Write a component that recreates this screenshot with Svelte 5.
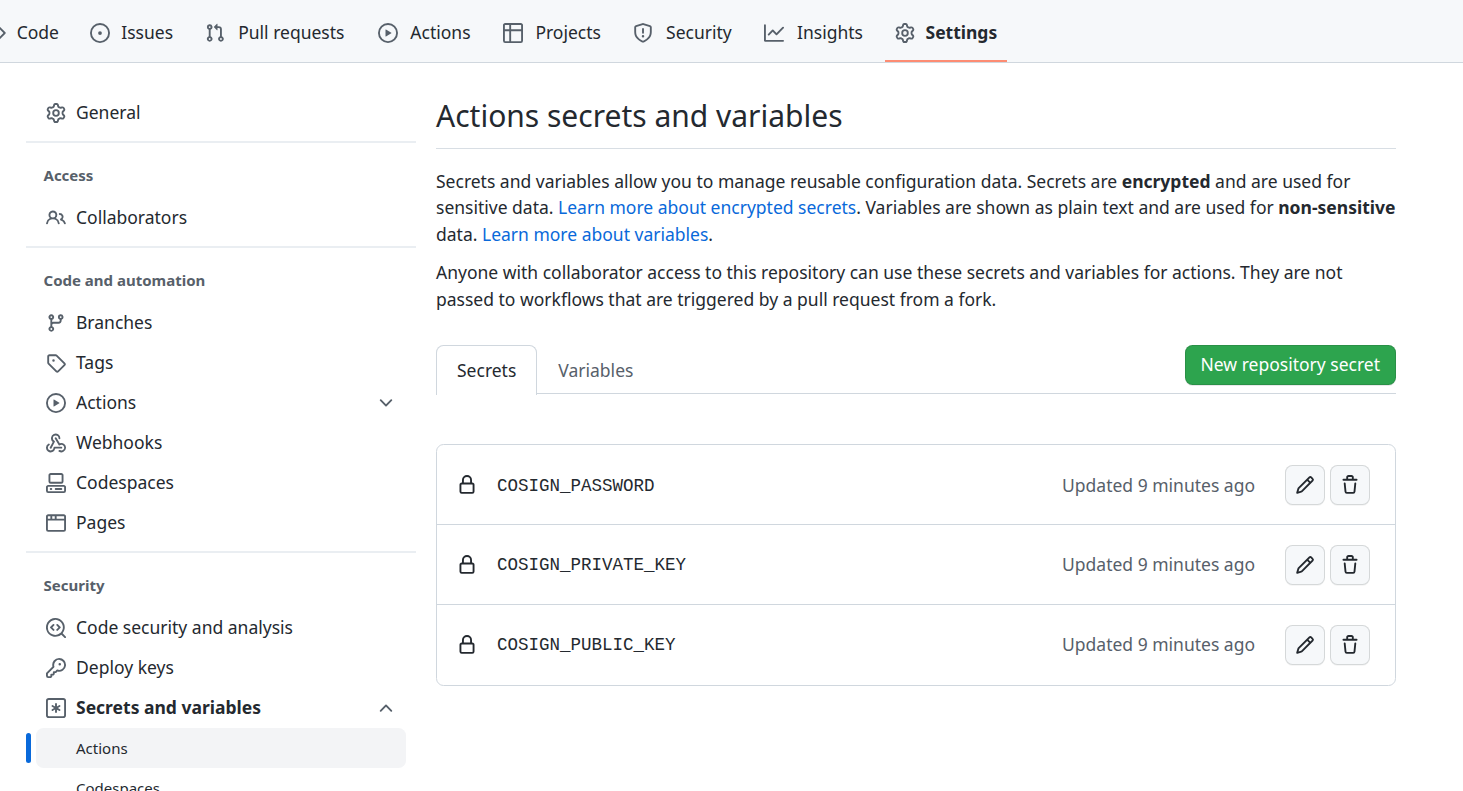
<script>
  const icons = {
    code: 'm11.28 3.22 4.25 4.25a.75.75 0 0 1 0 1.06l-4.25 4.25a.75.75 0 0 1-1.06-1.06L13.94 8l-3.72-3.72a.75.75 0 0 1 1.06-1.06Zm-6.56 0a.75.75 0 0 1 1.06 1.06L2.06 8l3.72 3.72a.75.75 0 0 1-1.06 1.06L.47 8.53a.75.75 0 0 1 0-1.06Z',
    issue: 'M8 9.5a1.5 1.5 0 100-3 1.5 1.5 0 000 3zM8 0a8 8 0 100 16A8 8 0 008 0zM1.5 8a6.5 6.5 0 1113 0 6.5 6.5 0 01-13 0z',
    pull: 'M7.177 3.073L9.573.677A.25.25 0 0110 .854v4.792a.25.25 0 01-.427.177L7.177 3.427a.25.25 0 010-.354zM3.75 2.5a.75.75 0 100 1.5.75.75 0 000-1.5zm-2.25.75a2.25 2.25 0 113 2.122v5.256a2.251 2.251 0 11-1.5 0V5.372A2.25 2.25 0 011.5 3.25zM11 2.5h-1V4h1a1 1 0 011 1v5.628a2.251 2.251 0 101.5 0V5A2.5 2.5 0 0011 2.5zm1 10.25a.75.75 0 111.5 0 .75.75 0 01-1.5 0zM3.75 12a.75.75 0 100 1.5.75.75 0 000-1.5z',
    play: 'M1.5 8a6.5 6.5 0 1113 0 6.5 6.5 0 01-13 0zM8 0a8 8 0 100 16A8 8 0 008 0zM6.379 5.227A.25.25 0 006 5.442v5.117a.25.25 0 00.379.214l4.264-2.559a.25.25 0 000-.428L6.379 5.227z',
    table: 'M0 1.75C0 .784.784 0 1.75 0h12.5C15.216 0 16 .784 16 1.75v12.5A1.75 1.75 0 0114.25 16H1.75A1.75 1.75 0 010 14.25V1.75zM1.5 6.5v7.75c0 .138.112.25.25.25H5v-8H1.5zM5 5H1.5V1.75a.25.25 0 01.25-.25H5V5zm1.5 1.5v8h7.75a.25.25 0 00.25-.25V6.5h-8zm8-1.5h-8V1.5h7.75a.25.25 0 01.25.25V5z',
    shield: 'M7.467.133a1.75 1.75 0 011.066 0l5.25 1.68A1.75 1.75 0 0115 3.48V7c0 1.566-.32 3.182-1.303 4.682-.983 1.498-2.585 2.813-5.032 3.855a1.7 1.7 0 01-1.33 0c-2.447-1.042-4.049-2.357-5.032-3.855C1.32 10.182 1 8.566 1 7V3.48a1.75 1.75 0 011.217-1.667l5.25-1.68zm.61 1.429a.25.25 0 00-.153 0l-5.25 1.68a.25.25 0 00-.174.238V7c0 1.358.275 2.666 1.057 3.86.784 1.194 2.121 2.34 4.366 3.297a.2.2 0 00.154 0c2.245-.956 3.582-2.104 4.366-3.298C13.225 9.666 13.5 8.36 13.5 7V3.48a.25.25 0 00-.174-.237l-5.25-1.68zM8.75 4.75a.75.75 0 00-1.5 0v3a.75.75 0 001.5 0v-3zM9 10.5a1 1 0 11-2 0 1 1 0 012 0z',
    graph: 'M1.5 1.75a.75.75 0 00-1.5 0v12.5c0 .414.336.75.75.75h14.5a.75.75 0 000-1.5H1.5V1.75zm14.28 2.53a.75.75 0 00-1.06-1.06L10 7.94 7.53 5.47a.75.75 0 00-1.06 0L3.22 8.72a.75.75 0 001.06 1.06L7 7.06l2.47 2.47a.75.75 0 001.06 0l5.25-5.25z',
    gear: 'M8 0a8.2 8.2 0 0 1 .701.031C9.444.095 9.99.645 10.16 1.29l.288 1.107c.018.066.079.158.212.224.231.114.454.243.668.386.123.082.233.09.299.071l1.103-.303c.644-.176 1.392.021 1.82.63.27.385.506.792.704 1.218.315.675.111 1.422-.364 1.891l-.814.806c-.049.048-.098.147-.088.294.016.257.016.515 0 .772-.01.147.038.246.088.294l.814.806c.475.469.679 1.216.364 1.891a7.977 7.977 0 0 1-.704 1.217c-.428.61-1.176.807-1.82.63l-1.102-.302c-.067-.019-.177-.011-.3.071a5.909 5.909 0 0 1-.668.386c-.133.066-.194.158-.211.224l-.29 1.106c-.168.646-.715 1.196-1.458 1.26a8.006 8.006 0 0 1-1.402 0c-.743-.064-1.289-.614-1.458-1.26l-.289-1.106c-.018-.066-.079-.158-.212-.224a5.738 5.738 0 0 1-.668-.386c-.123-.082-.233-.09-.299-.071l-1.103.303c-.644.176-1.392-.021-1.82-.63a8.12 8.12 0 0 1-.704-1.218c-.315-.675-.111-1.422.363-1.891l.815-.806c.05-.048.098-.147.088-.294a6.214 6.214 0 0 1 0-.772c.01-.147-.038-.246-.088-.294l-.815-.806C.635 6.045.431 5.298.746 4.623a7.92 7.92 0 0 1 .704-1.217c.428-.61 1.176-.807 1.82-.63l1.102.302c.067.019.177.011.3-.071.214-.143.437-.272.668-.386.133-.066.194-.158.211-.224l.29-1.106C6.009.645 6.556.095 7.299.03 7.53.01 7.764 0 8 0Zm-.571 1.525c-.036.003-.108.036-.137.146l-.289 1.105c-.147.561-.549.967-.998 1.189-.173.086-.34.183-.5.29-.417.278-.97.423-1.529.27l-1.103-.303c-.109-.03-.175.016-.195.045-.22.312-.412.644-.573.99-.014.031-.021.11.059.19l.815.806c.411.406.562.957.53 1.456a4.709 4.709 0 0 0 0 .582c.032.499-.119 1.05-.53 1.456l-.815.806c-.081.08-.073.159-.059.19.162.346.353.677.573.989.02.03.085.076.195.046l1.102-.303c.56-.153 1.113-.008 1.53.27.161.107.328.204.501.29.447.222.85.629.997 1.189l.289 1.105c.029.109.101.143.137.146a6.6 6.6 0 0 0 1.142 0c.036-.003.108-.036.137-.146l.289-1.105c.147-.561.549-.967.998-1.189.173-.086.34-.183.5-.29.417-.278.97-.423 1.529-.27l1.103.303c.109.029.175-.016.195-.045.22-.313.411-.644.573-.99.014-.031.021-.11-.059-.19l-.815-.806c-.411-.406-.562-.957-.53-1.456a4.709 4.709 0 0 0 0-.582c-.032-.499.119-1.05.53-1.456l.815-.806c.081-.08.073-.159.059-.19a6.464 6.464 0 0 0-.573-.989c-.02-.03-.085-.076-.195-.046l-1.102.303c-.56.153-1.113.008-1.53-.27a4.44 4.44 0 0 0-.501-.29c-.447-.222-.85-.629-.997-1.189l-.289-1.105c-.029-.11-.101-.143-.137-.146a6.6 6.6 0 0 0-1.142 0ZM11 8a3 3 0 1 1-6 0 3 3 0 0 1 6 0ZM9.5 8a1.5 1.5 0 1 0-3.001.001A1.5 1.5 0 0 0 9.5 8Z',
    people: 'M5.5 3.5a2 2 0 100 4 2 2 0 000-4zM2 5.5a3.5 3.5 0 115.898 2.549 5.507 5.507 0 013.034 4.084.75.75 0 11-1.482.235 4.001 4.001 0 00-7.9 0 .75.75 0 01-1.482-.236A5.507 5.507 0 013.102 8.05 3.49 3.49 0 012 5.5zM11 4a.75.75 0 100 1.5 1.5 1.5 0 01.666 2.844.75.75 0 00-.416.672v.352a.75.75 0 00.574.73c1.2.289 2.162 1.2 2.522 2.372a.75.75 0 101.434-.44 5.01 5.01 0 00-2.56-3.012A3 3 0 0011 4z',
    branch: 'M11.75 2.5a.75.75 0 100 1.5.75.75 0 000-1.5zm-2.25.75a2.25 2.25 0 113 2.122V6A2.5 2.5 0 0110 8.5H6a1 1 0 00-1 1v1.128a2.251 2.251 0 11-1.5 0V5.372a2.25 2.25 0 111.5 0v1.836A2.492 2.492 0 016 7h4a1 1 0 001-1v-.628A2.25 2.25 0 019.5 3.25zM4.25 12a.75.75 0 100 1.5.75.75 0 000-1.5zM3.5 3.25a.75.75 0 111.5 0 .75.75 0 01-1.5 0z',
    tag: 'M1 7.775V2.75C1 1.784 1.784 1 2.75 1h5.025c.464 0 .91.184 1.238.513l6.25 6.25a1.75 1.75 0 0 1 0 2.474l-5.026 5.026a1.75 1.75 0 0 1-2.474 0l-6.25-6.25A1.752 1.752 0 0 1 1 7.775Zm1.5 0c0 .066.026.13.073.177l6.25 6.25a.25.25 0 0 0 .354 0l5.025-5.025a.25.25 0 0 0 0-.354l-6.25-6.25a.25.25 0 0 0-.177-.073H2.75a.25.25 0 0 0-.25.25ZM6 5a1 1 0 1 1 0 2 1 1 0 0 1 0-2Z',
    webhook: 'M5.5 4.25a2.25 2.25 0 0 1 4.5 0 .75.75 0 0 0 1.5 0 3.75 3.75 0 1 0-6.14 2.889l-2.272 4.258a.75.75 0 0 0 1.324.706L7 7.25a.75.75 0 0 0-.309-1.015A2.25 2.25 0 0 1 5.5 4.25ZM7.364 3.607a.75.75 0 0 1 1.03.257l2.608 4.349a3.75 3.75 0 1 1-.628 6.785.75.75 0 0 1 .752-1.299 2.25 2.25 0 1 0-.033-3.88.75.75 0 0 1-1.03-.256L7.107 4.636a.75.75 0 0 1 .257-1.03ZM2.9 8.776A.75.75 0 0 1 2.625 9.8 2.25 2.25 0 1 0 6 11.75a.75.75 0 0 1 .75-.751h5.5a.75.75 0 0 1 0 1.5H7.425a3.751 3.751 0 1 1-5.55-3.998.75.75 0 0 1 1.024.274Z',
    codespaces: 'M0 11.25c0-.966.784-1.75 1.75-1.75h12.5c.966 0 1.75.784 1.75 1.75v3A1.75 1.75 0 0114.25 16H1.75A1.75 1.75 0 010 14.25zm2-9.5C2 .784 2.784 0 3.75 0h8.5C13.216 0 14 .784 14 1.75v5a1.75 1.75 0 01-1.75 1.75h-8.5A1.75 1.75 0 012 6.75zm1.75-.25a.25.25 0 00-.25.25v5c0 .138.112.25.25.25h8.5a.25.25 0 00.25-.25v-5a.25.25 0 00-.25-.25zm-2 9.5a.25.25 0 00-.25.25v3c0 .138.112.25.25.25h12.5a.25.25 0 00.25-.25v-3a.25.25 0 00-.25-.25zM7 12.75a.75.75 0 01.75-.75h4.5a.75.75 0 010 1.5h-4.5a.75.75 0 01-.75-.75zm-4 0a.75.75 0 01.75-.75h.5a.75.75 0 010 1.5h-.5a.75.75 0 01-.75-.75z',
    browser: 'M0 2.75C0 1.784.784 1 1.75 1h12.5c.966 0 1.75.784 1.75 1.75v10.5A1.75 1.75 0 0114.25 15H1.75A1.75 1.75 0 010 13.25zM14.5 6h-13v7.25c0 .138.112.25.25.25h12.5a.25.25 0 00.25-.25zm-6-3.5v2h6V2.75a.25.25 0 00-.25-.25zM5 2.5v2h2v-2zm-3.25 0a.25.25 0 00-.25.25V4.5h2v-2z',
    codescan: 'M8.47 4.97a.75.75 0 000 1.06L9.94 7.5 8.47 8.97a.75.75 0 101.06 1.06l2-2a.75.75 0 000-1.06l-2-2a.75.75 0 00-1.06 0zM6.53 6.03a.75.75 0 00-1.06-1.06l-2 2a.75.75 0 000 1.06l2 2a.75.75 0 101.06-1.06L5.06 7.5l1.47-1.47zM12.246 13.307a7.5 7.5 0 111.06-1.06l2.474 2.473a.75.75 0 11-1.06 1.06l-2.474-2.473zM1.5 7.5a6 6 0 1110.386 4.094.75.75 0 00-.292.293A6 6 0 011.5 7.5z',
    key: 'M10.5 0a5.499 5.499 0 1 1-1.288 10.848l-.932.932a.749.749 0 0 1-.53.22H7v.75a.749.749 0 0 1-.22.53l-.5.5a.749.749 0 0 1-.53.22H5v.75a.749.749 0 0 1-.22.53l-.5.5a.749.749 0 0 1-.53.22h-2A1.75 1.75 0 0 1 0 14.25v-2c0-.199.079-.389.22-.53l4.932-4.932A5.5 5.5 0 0 1 10.5 0Zm-4 5.5c-.001.431.069.86.205 1.269a.75.75 0 0 1-.181.768L1.5 12.56v1.69c0 .138.112.25.25.25h1.69l.06-.06v-1.19a.75.75 0 0 1 .75-.75h1.19l.06-.06v-1.19a.75.75 0 0 1 .75-.75h1.19l1.023-1.025a.75.75 0 0 1 .768-.18A4 4 0 1 0 6.5 5.5ZM11 6a1 1 0 1 1 0-2 1 1 0 0 1 0 2Z',
    asterisk: 'M2.25 0h11.5A2.25 2.25 0 0 1 16 2.25v11.5A2.25 2.25 0 0 1 13.75 16H2.25A2.25 2.25 0 0 1 0 13.75V2.25A2.25 2.25 0 0 1 2.25 0Zm0 1.5a.75.75 0 0 0-.75.75v11.5c0 .414.336.75.75.75h11.5a.75.75 0 0 0 .75-.75V2.25a.75.75 0 0 0-.75-.75ZM8 4a.75.75 0 0 1 .75.75V6.7l1.69-.975a.75.75 0 0 1 .75 1.3L9.5 8l1.69.976a.75.75 0 0 1-.75 1.298L8.75 9.3v1.951a.75.75 0 0 1-1.5 0V9.299l-1.69.976a.75.75 0 0 1-.75-1.3L6.5 8l-1.69-.975a.75.75 0 0 1 .75-1.3l1.69.976V4.75A.75.75 0 0 1 8 4Z',
    lock: 'M4 4a4 4 0 0 1 8 0v2h.25c.966 0 1.75.784 1.75 1.75v5.5A1.75 1.75 0 0 1 12.25 15h-8.5A1.75 1.75 0 0 1 2 13.25v-5.5C2 6.784 2.784 6 3.75 6H4Zm8.25 3.5h-8.5a.25.25 0 0 0-.25.25v5.5c0 .138.112.25.25.25h8.5a.25.25 0 0 0 .25-.25v-5.5a.25.25 0 0 0-.25-.25ZM10.5 6V4a2.5 2.5 0 1 0-5 0v2Z',
    pencil: 'M11.013 1.427a1.75 1.75 0 012.474 0l1.086 1.086a1.75 1.75 0 010 2.474l-8.61 8.61c-.21.21-.47.364-.756.445l-3.251.93a.75.75 0 01-.927-.928l.929-3.25a1.75 1.75 0 01.445-.758l8.61-8.61zm1.414 1.06a.25.25 0 00-.354 0L10.811 3.75l1.439 1.44 1.263-1.263a.25.25 0 000-.354l-1.086-1.086zM11.189 6.25L9.75 4.81l-6.286 6.287a.25.25 0 00-.064.108l-.558 1.953 1.953-.558a.249.249 0 00.108-.064l6.286-6.286z',
    trash: 'M11 1.75V3h2.25a.75.75 0 0 1 0 1.5H2.75a.75.75 0 0 1 0-1.5H5V1.75C5 .784 5.784 0 6.75 0h2.5C10.216 0 11 .784 11 1.75ZM4.496 6.675l.66 6.6a.25.25 0 0 0 .249.225h5.19a.25.25 0 0 0 .249-.225l.66-6.6a.75.75 0 0 1 1.492.149l-.66 6.6A1.748 1.748 0 0 1 10.595 15h-5.19a1.75 1.75 0 0 1-1.741-1.575l-.66-6.6a.75.75 0 1 1 1.492-.15ZM6.5 1.75V3h3V1.75a.25.25 0 0 0-.25-.25h-2.5a.25.25 0 0 0-.25.25Z',
    down: 'M12.78 5.22a.75.75 0 010 1.06l-4.25 4.25a.75.75 0 01-1.06 0L3.22 6.28a.75.75 0 011.06-1.06L8 8.94l3.72-3.72a.75.75 0 011.06 0z',
    up: 'M3.22 10.78a.75.75 0 010-1.06l4.25-4.25a.75.75 0 011.06 0l4.25 4.25a.75.75 0 01-1.06 1.06L8 7.06l-3.72 3.72a.75.75 0 01-1.06 0z'
  };

  const tabs = [
    ['code', 'Code'],
    ['issue', 'Issues'],
    ['pull', 'Pull requests'],
    ['play', 'Actions'],
    ['table', 'Projects'],
    ['shield', 'Security'],
    ['graph', 'Insights'],
    ['gear', 'Settings']
  ];

  const groups = [
    { items: [{ icon: 'gear', label: 'General' }] },
    { title: 'Access', items: [{ icon: 'people', label: 'Collaborators' }] },
    {
      title: 'Code and automation',
      items: [
        { icon: 'branch', label: 'Branches' },
        { icon: 'tag', label: 'Tags' },
        { icon: 'play', label: 'Actions', chevron: 'down' },
        { icon: 'webhook', label: 'Webhooks' },
        { icon: 'codespaces', label: 'Codespaces' },
        { icon: 'browser', label: 'Pages' }
      ]
    },
    {
      title: 'Security',
      items: [
        { icon: 'codescan', label: 'Code security and analysis' },
        { icon: 'key', label: 'Deploy keys' },
        {
          icon: 'asterisk',
          label: 'Secrets and variables',
          chevron: 'up',
          children: ['Actions', 'Codespaces']
        }
      ]
    }
  ];

  const secrets = ['COSIGN_PASSWORD', 'COSIGN_PRIVATE_KEY', 'COSIGN_PUBLIC_KEY'];
</script>

{#snippet icon(name)}
  <svg class="icon" viewBox="0 0 16 16" aria-hidden="true"><path fill-rule="evenodd" d={icons[name]} /></svg>
{/snippet}

<div class="page">
  <nav class="topnav">
    {#each tabs as [glyph, label]}
      <a class="tab" class:current={label === 'Settings'} href="#{glyph}">
        {@render icon(glyph)}
        <span class="tab-label" data-content={label}>{label}</span>
      </a>
    {/each}
  </nav>

  <div class="layout">
    <aside class="sidebar">
      {#each groups as group}
        <section class="group">
          {#if group.title}<h3>{group.title}</h3>{/if}
          {#each group.items as item}
            <a class="item" class:open={item.children} href="#{item.icon}">
              {@render icon(item.icon)}
              <span class="item-label">{item.label}</span>
              {#if item.chevron}{@render icon(item.chevron)}{/if}
            </a>
            {#each item.children ?? [] as child, i}
              <a class="subitem" class:selected={i === 0} href="#{child}">{child}</a>
            {/each}
          {/each}
        </section>
      {/each}
    </aside>

    <main>
      <h1>Actions secrets and variables</h1>
      <p>
        Secrets and variables allow you to manage reusable configuration data. Secrets are <b>encrypted</b> and are used for
        sensitive data. <a href="#secrets">Learn more about encrypted secrets</a>. Variables are shown as plain text and are used for <b>non-sensitive</b>
        data. <a href="#variables">Learn more about variables</a>.
      </p>
      <p>
        Anyone with collaborator access to this repository can use these secrets and variables for actions. They are not
        passed to workflows that are triggered by a pull request from a fork.
      </p>

      <div class="tabnav">
        <button class="subtab active">Secrets</button>
        <button class="subtab">Variables</button>
        <button class="primary">New repository secret</button>
      </div>

      <ul class="box">
        {#each secrets as name}
          <li>
            {@render icon('lock')}
            <code>{name}</code>
            <span class="updated">Updated 9 minutes ago</span>
            <button class="icon-btn" aria-label="Edit">{@render icon('pencil')}</button>
            <button class="icon-btn" aria-label="Delete">{@render icon('trash')}</button>
          </li>
        {/each}
      </ul>
    </main>
  </div>
</div>

<style>
  :global(body) {
    margin: 0;
    background: #fff;
  }
  * {
    box-sizing: border-box;
  }
  .page {
    height: 791px;
    overflow: hidden;
    font-family: 'Noto Sans', sans-serif;
    font-size: 17.5px;
    line-height: 26.25px;
    color: #24292f;
  }
  a {
    color: inherit;
    text-decoration: none;
  }
  button {
    font: inherit;
    color: inherit;
    margin: 0;
  }
  .icon {
    width: 20px;
    height: 20px;
    flex: none;
    display: block;
    fill: #57606a;
  }

  .topnav {
    display: flex;
    gap: 10px;
    height: 63px;
    margin-left: -24px;
    background: #f6f8fa;
    border-bottom: 1px solid #d0d7de;
  }
  .tab {
    display: flex;
    align-items: center;
    gap: 10px;
    padding: 5px 10px 0;
    height: 62px;
    border-bottom: 2px solid transparent;
    white-space: nowrap;
  }
  .tab-label {
    text-align: center;
  }
  /* Reserves the bold width so that selection does not move the tabs */
  .tab-label::before {
    content: attr(data-content);
    display: block;
    height: 0;
    font-weight: 700;
    visibility: hidden;
  }
  .current {
    font-weight: 700;
    border-bottom-color: #fd8c73;
  }

  .layout {
    display: grid;
    grid-template-columns: 390px 960px;
    column-gap: 20px;
    padding: 30px 0 0 26px;
  }
  .group + .group {
    margin-top: 8px;
    border-top: 2px solid #eaeef2;
  }
  h3 {
    margin: 0;
    padding: 21px 17.5px 11.5px;
    font-size: 15px;
    line-height: 22.5px;
    font-weight: 700;
    color: #57606a;
  }
  .item {
    display: flex;
    align-items: center;
    gap: 10px;
    height: 40px;
    padding: 0 20px;
  }
  .item-label {
    flex: 1;
    padding-bottom: 1px;
  }
  .open {
    font-weight: 700;
  }
  .subitem {
    position: relative;
    display: block;
    height: 40px;
    margin: 0 10px;
    padding: 9px 40px;
    font-size: 15px;
    line-height: 22.5px;
    border-radius: 7.5px;
  }
  .selected {
    background: #f3f4f6;
  }
  .selected::before {
    content: '';
    position: absolute;
    left: -10px;
    top: 5px;
    width: 5px;
    height: 30px;
    border-radius: 2.5px;
    background: #0969da;
  }

  h1 {
    margin: 0 0 19px;
    padding-bottom: 10px;
    font-size: 30px;
    line-height: 45px;
    font-weight: 400;
    border-bottom: 1px solid #d8dee4;
  }
  p {
    margin: 0 0 12.5px;
  }
  p a {
    color: #0969da;
  }
  b {
    font-weight: 700;
  }
  .tabnav {
    display: flex;
    align-items: flex-start;
    height: 49px;
    margin-top: 33px;
    border-bottom: 1px solid #d0d7de;
  }
  .subtab {
    height: 50px;
    padding: 0 20px;
    border: 1px solid transparent;
    border-bottom: 0;
    background: none;
    color: #57606a;
  }
  .active {
    color: #24292f;
    background: #fff;
    border-color: #d0d7de;
    border-radius: 7.5px 7.5px 0 0;
  }
  .primary {
    height: 40px;
    margin-left: auto;
    padding: 0 15px;
    line-height: 25px;
    color: #fff;
    background: #2da44e;
    border: 1px solid rgba(27, 31, 36, 0.15);
    border-radius: 7.5px;
    box-shadow: 0 1px 0 rgba(27, 31, 36, 0.1);
  }

  .box {
    list-style: none;
    margin: 50px 0 0;
    padding: 0;
    border: 1px solid #d0d7de;
    border-radius: 7.5px;
  }
  li {
    display: flex;
    align-items: center;
    height: 80px;
    padding: 0 25px 0 20px;
  }
  li + li {
    box-shadow: 0 -1px 0 #d0d7de;
  }
  li .icon {
    fill: #24292f;
  }
  code {
    margin-left: 20px;
    font: 17.5px/26px 'Liberation Mono', monospace;
  }
  li:first-child code {
    padding-top: 2px;
  }
  .updated {
    margin: 0 30px 0 auto;
    color: #57606a;
  }
  li + li .updated {
    padding-bottom: 2px;
  }
  .icon-btn {
    display: grid;
    place-items: center;
    width: 40px;
    height: 40px;
    padding: 0;
    background: #f6f8fa;
    border: 1px solid rgba(27, 31, 36, 0.15);
    border-radius: 7.5px;
    box-shadow: 0 1px 0 rgba(27, 31, 36, 0.04);
  }
  .icon-btn + .icon-btn {
    margin-left: 5px;
  }
</style>
